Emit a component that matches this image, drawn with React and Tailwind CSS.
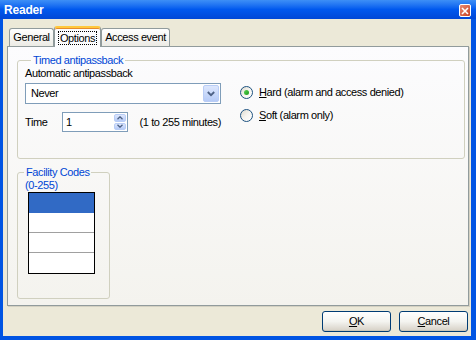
const font = { fontFamily: '"Liberation Sans", Arial, sans-serif' }

function Radio({ checked, letter, rest }) {
  return (
    <div className="flex h-[13px] items-center gap-[6px]">
      <span className="flex h-[13px] w-[13px] items-center justify-center rounded-full border border-[#1c5180] bg-gradient-to-br from-[#dcd9cd] via-[#f6f5f0] to-white">
        {checked ? (
          <span className="h-[5px] w-[5px] rounded-full bg-gradient-to-br from-[#55d451] to-[#1a9a1a]" />
        ) : null}
      </span>
      <span className="leading-[13px]">
        <span className="underline underline-offset-[1px]">{letter}</span>
        {rest}
      </span>
    </div>
  )
}

function Tab({ label, selected, width }) {
  if (selected) {
    return (
      <div
        className={`relative z-10 -mb-px flex h-[21px] ${width} items-center justify-center rounded-t-[3px] border-x border-[#919b9c] border-t-[2px] border-t-[#ffc83c] bg-[#fcfcfe] shadow-[inset_0_1px_0_#e68b2c]`}
      >
        <span className="border border-dotted border-black px-[1px] leading-[12px]">{label}</span>
      </div>
    )
  }
  return (
    <div
      className={`flex h-[18px] ${width} items-center justify-center rounded-t-[3px] border-x border-t border-[#919b9c] bg-gradient-to-b from-white to-[#ecebe5]`}
    >
      <span className="leading-[13px]">{label}</span>
    </div>
  )
}

function Button({ letter, rest }) {
  return (
    <div className="flex h-[21px] w-[69px] items-center justify-center rounded-[3px] border border-[#003c74] bg-gradient-to-b from-white via-[#f4f4f0] to-[#d6d0c5] shadow-[inset_0_-1px_0_#cdc7b7]">
      <span className="leading-[13px]">
        <span className="underline underline-offset-[1px]">{letter}</span>
        {rest}
      </span>
    </div>
  )
}

export default function App() {
  return (
    <div
      className="flex h-[340px] w-[476px] flex-col bg-[#0054e3] text-[11px] tracking-[-0.4px] text-black"
      style={font}
    >
      {/* title bar */}
      <div className="flex h-[19px] items-center justify-between bg-gradient-to-b from-[#3d8ff6] via-[#0058ee] to-[#0047d6] pl-[4px] pr-[5px]">
        <span className="text-[12px] font-bold leading-[14px] tracking-[-0.2px] text-white">Reader</span>
        <div className="mt-[2px] flex h-[13px] w-[12px] items-center justify-center rounded-[2px] border border-white bg-gradient-to-br from-[#e88a72] to-[#c7401f]">
          <svg width="8" height="8" viewBox="0 0 8 8">
            <path d="M1 1 L7 7 M7 1 L1 7" stroke="white" strokeWidth="1.6" />
          </svg>
        </div>
      </div>

      {/* body */}
      <div className="ml-[3px] mr-[5px] flex h-[317px] flex-col bg-[#ece9d8]">
        <div className="flex h-[27px] items-end pl-[6px]">
          <Tab label="General" width="w-[45px]" />
          <Tab label="Options" width="w-[47px]" selected />
          <Tab label="Access event" width="w-[69px]" />
        </div>

        <div className="ml-[4px] h-[260px] w-[462px] border border-[#919b9c] bg-gradient-to-b from-[#fcfcfe] to-[#f4f3ee] shadow-[1px_1px_0_#d4d1c2]">
          <fieldset className="ml-[9px] mt-[7px] h-[105px] w-[448px] rounded-[3px] border border-[#d0d0bf] pl-[7px]">
            <legend className="ml-[6px] px-[2px] leading-[13px] text-[#0046d5]">Timed antipassback</legend>
            <div className="leading-[13px]">Automatic antipassback</div>
            <div className="flex">
              <div className="w-[196px]">
                <div className="mt-[3px] flex h-[21px] items-center justify-between border border-[#7f9db9] bg-white p-[1px]">
                  <span className="pl-[4px] leading-[13px]">Never</span>
                  <div className="flex h-[17px] w-[16px] items-center justify-center rounded-[2px] border border-[#b9cdf6] bg-gradient-to-b from-[#dde7fd] to-[#b6cbf7]">
                    <svg width="8" height="6" viewBox="0 0 8 6">
                      <path d="M0.8 1 L4 4.2 L7.2 1" stroke="#4d6185" strokeWidth="1.8" fill="none" />
                    </svg>
                  </div>
                </div>
                <div className="mt-[8px] flex h-[20px] items-center">
                  <span className="w-[38px] leading-[13px]">Time</span>
                  <div className="flex h-[20px] w-[67px] items-center justify-between border border-[#7f9db9] bg-white p-[1px]">
                    <span className="pl-[2px] leading-[13px]">1</span>
                    <div className="flex h-[16px] w-[12px] flex-col gap-px">
                      <div className="flex flex-1 items-center justify-center rounded-[2px] border border-[#b9cdf6] bg-gradient-to-b from-[#dde7fd] to-[#b6cbf7]">
                        <svg width="6" height="4" viewBox="0 0 6 4">
                          <path d="M0.5 3.3 L3 0.8 L5.5 3.3" stroke="#4d6185" strokeWidth="1.3" fill="none" />
                        </svg>
                      </div>
                      <div className="flex flex-1 items-center justify-center rounded-[2px] border border-[#b9cdf6] bg-gradient-to-b from-[#dde7fd] to-[#b6cbf7]">
                        <svg width="6" height="4" viewBox="0 0 6 4">
                          <path d="M0.5 0.7 L3 3.2 L5.5 0.7" stroke="#4d6185" strokeWidth="1.3" fill="none" />
                        </svg>
                      </div>
                    </div>
                  </div>
                  <span className="ml-[12px] whitespace-nowrap leading-[13px]">(1 to 255 minutes)</span>
                </div>
              </div>
              <div className="ml-[19px] mt-[6px] flex flex-col gap-[10px]">
                <Radio checked letter="H" rest="ard (alarm and access denied)" />
                <Radio letter="S" rest="oft (alarm only)" />
              </div>
            </div>
          </fieldset>

          <fieldset className="ml-[9px] mt-[7px] h-[133px] w-[93px] rounded-[3px] border border-[#d0d0bf]">
            <legend className="ml-[6px] px-[2px] leading-[13px] text-[#0046d5]">Facility Codes</legend>
            <div className="pl-[7px] leading-[13px] text-[#0046d5]">(0-255)</div>
            <div className="ml-[10px] flex h-[82px] w-[67px] flex-col border border-black bg-white">
              <div className="h-[20px] bg-[#316ac5]" />
              <div className="h-[20px] border-b border-[#a0a0a0]" />
              <div className="h-[20px] border-b border-[#a0a0a0]" />
              <div className="h-[20px]" />
            </div>
          </fieldset>
        </div>

        <div className="mt-[5px] flex justify-end gap-[8px] pr-[3px]">
          <Button letter="O" rest="K" />
          <Button letter="C" rest="ancel" />
        </div>
      </div>
    </div>
  )
}
